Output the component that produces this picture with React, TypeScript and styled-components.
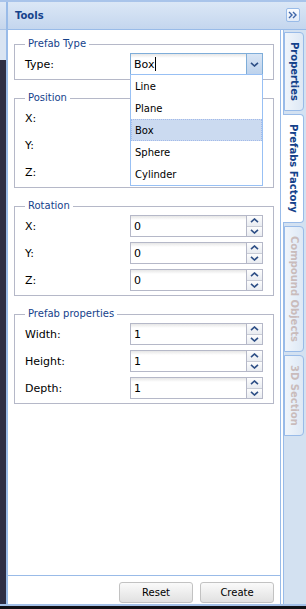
import styled, { createGlobalStyle } from "styled-components"

const GlobalStyle = createGlobalStyle`
  * { box-sizing: border-box; }
  html, body { margin: 0; padding: 0; background: #101014; overflow: hidden; }
  body { font-family: "DejaVu Sans", "Liberation Sans", sans-serif; }
`

const Frame = styled.div`
  width: 306px;
  height: 609px;
  display: flex;
  flex-direction: column;
  background: #111116;
`

const Shell = styled.div`
  height: 606px;
  display: flex;
  border-top: 2px solid #a9c4ea;
  border-bottom: 2px solid #a3c0e8;
`

const LeftStrip = styled.div`
  width: 6px;
  display: flex;
  flex-direction: column;
`

const StripCap = styled.div`
  height: 28px;
  background: linear-gradient(#dde8f6, #c6d6ec);
  border-bottom: 1px solid #a9c2e4;
`

const StripGap = styled.div`
  height: 30px;
  background: #d9e4f2;
`

const StripDark = styled.div`
  flex: 1;
  background: #2d2e45;
`

const Panel = styled.div`
  flex: 1;
  display: flex;
  flex-direction: column;
  border-left: 2px solid #99bbe8;
  min-width: 0;
`

const Header = styled.div`
  height: 28px;
  display: flex;
  align-items: center;
  justify-content: space-between;
  padding: 0 6px 0 7px;
  background: linear-gradient(#dbe7f6, #c4d6ee);
  border-bottom: 1px solid #99bbe8;
`

const Title = styled.span`
  font-weight: bold;
  font-size: 10px;
  color: #15428b;
`

const CollapseBtn = styled.button`
  width: 14px;
  height: 14px;
  padding: 0;
  margin-top: -2px;
  border: 1px solid #99bbe8;
  border-radius: 2px;
  background: linear-gradient(#fbfdff, #e2ebf7);
  display: flex;
  align-items: center;
  justify-content: center;
`

const Body = styled.div`
  flex: 1;
  display: flex;
  background: #fff;
  min-height: 0;
`

const FormCol = styled.div`
  width: 273px;
  display: flex;
  flex-direction: column;
  border-right: 1px solid #99bbe8;
`

const Form = styled.div`
  flex: 1;
  display: flex;
  flex-direction: column;
  gap: 12px;
  padding: 8px 6px 0;
  border-bottom: 1px solid #99bbe8;
`

const Footer = styled.div`
  height: 28px;
  display: flex;
  justify-content: flex-end;
  align-items: flex-start;
  gap: 7px;
  padding: 6px 6px 0 0;
`

const Button = styled.button`
  width: 74px;
  height: 21px;
  border: 1px solid #c2c2c2;
  border-radius: 3px;
  background: linear-gradient(#fafafa, #e1e1e1);
  font-family: "DejaVu Sans", sans-serif;
  font-size: 10px;
  color: #000;
  padding: 0;
`

const Fieldset = styled.fieldset`
  margin: 0;
  padding: 3px 10px 4px 10px;
  border: 1px solid #b5b8c8;
  display: flex;
  flex-direction: column;
  gap: 5px;
  min-width: 0;
`

const Legend = styled.legend`
  padding: 0 3px;
  font-size: 10px;
  line-height: 12px;
  color: #15428b;
`

const Row = styled.div`
  display: grid;
  grid-template-columns: 105px 133px;
  align-items: center;
  height: 22px;
`

const Label = styled.span`
  font-size: 11px;
  color: #000;
`

const Field = styled.div`
  position: relative;
  display: flex;
  height: 22px;
`

const Input = styled.div<{ $focus?: boolean }>`
  flex: 1;
  display: flex;
  align-items: center;
  padding: 0 3px;
  border: 1px solid ${p => (p.$focus ? "#7eadd9" : "#b5b8c8")};
  background: linear-gradient(#e6e6e6, #fff 4px);
  font-size: 11px;
  color: #000;
`

const Caret = styled.span`
  display: inline-block;
  width: 1px;
  height: 14px;
  margin-left: 1px;
  background: #000;
`

const ComboTrigger = styled.div`
  width: 16px;
  border: 1px solid #7eadd9;
  border-left: none;
  background: linear-gradient(#d8e5f5, #bdd2ec);
  display: flex;
  align-items: center;
  justify-content: center;
`

const SpinTrigger = styled.div`
  width: 16px;
  border: 1px solid #b5b8c8;
  border-left: none;
  display: flex;
  flex-direction: column;
`

const SpinHalf = styled.div<{ $down?: boolean }>`
  flex: 1;
  display: flex;
  align-items: center;
  justify-content: center;
  background: linear-gradient(#fdfdfd, #e9ecf1);
  border-top: ${p => (p.$down ? "1px solid #c9ccd6" : "none")};
`

const List = styled.div`
  position: absolute;
  top: 100%;
  left: 0;
  width: 133px;
  margin-top: -1px;
  border: 1px solid #98c0f4;
  background: #fff;
  z-index: 5;
`

const Item = styled.div<{ $selected?: boolean }>`
  height: 22px;
  display: flex;
  align-items: center;
  padding-left: 3px;
  font-size: 10px;
  color: #000;
  border: 1px ${p => (p.$selected ? "dotted #a3bae9" : "solid transparent")};
  background: ${p => (p.$selected ? "#cbdaf0" : "transparent")};
`

const TabStrip = styled.div`
  width: 23px;
  margin-left: 2px;
  display: flex;
  flex-direction: column;
  gap: 3px;
  padding-top: 2px;
  background: #d3e1f1;
  border-left: 1px solid #99bbe8;
`

const Tab = styled.div<{ $active?: boolean; $disabled?: boolean }>`
  width: ${p => (p.$active ? "21px" : "20px")};
  margin-left: ${p => (p.$active ? "-1px" : "0")};
  padding: 9px 0;
  writing-mode: vertical-rl;
  display: flex;
  align-items: center;
  font-size: 10px;
  font-weight: bold;
  line-height: 18px;
  color: ${p => (p.$disabled ? "#c9bcbc" : "#15428b")};
  background: ${p => (p.$active ? "#fff" : "linear-gradient(90deg, #f0f5fb, #dde8f5)")};
  border: 1px solid #99bbe8;
  border-left: ${p => (p.$active ? "none" : "1px solid #99bbe8")};
  border-radius: 0 4px 4px 0;
`

const Chevron = ({ up }: { up?: boolean }) => (
  <svg width="9" height="5" viewBox="0 0 9 5">
    <path
      d={up ? "M1 4.2 L4.5 1 L8 4.2" : "M1 0.8 L4.5 4 L8 0.8"}
      fill="none"
      stroke="#2e4f86"
      strokeWidth="1.6"
    />
  </svg>
)

const Spinner = ({ value }: { value: string }) => (
  <Field>
    <Input>{value}</Input>
    <SpinTrigger>
      <SpinHalf><Chevron up /></SpinHalf>
      <SpinHalf $down><Chevron /></SpinHalf>
    </SpinTrigger>
  </Field>
)

const prefabs = ["Line", "Plane", "Box", "Sphere", "Cylinder"]

const groups = [
  { title: "Position", rows: [["X:", ""], ["Y:", ""], ["Z:", ""]] },
  { title: "Rotation", rows: [["X:", "0"], ["Y:", "0"], ["Z:", "0"]] },
  { title: "Prefab properties", rows: [["Width:", "1"], ["Height:", "1"], ["Depth:", "1"]] },
]

const tabs = [
  { name: "Properties" },
  { name: "Prefabs Factory", active: true },
  { name: "Compound Objects", disabled: true },
  { name: "3D Section", disabled: true },
]

export default function App() {
  return (
    <Frame>
      <GlobalStyle />
      <Shell>
        <LeftStrip>
          <StripCap />
          <StripGap />
          <StripDark />
        </LeftStrip>
        <Panel>
          <Header>
            <Title>Tools</Title>
            <CollapseBtn>
              <svg width="10" height="8" viewBox="0 0 10 8">
                <path d="M1 1 L4 4 L1 7 M5 1 L8 4 L5 7" fill="none" stroke="#3f66a8" strokeWidth="1.4" />
              </svg>
            </CollapseBtn>
          </Header>
          <Body>
            <FormCol>
              <Form>
                <Fieldset>
                  <Legend>Prefab Type</Legend>
                  <Row>
                    <Label>Type:</Label>
                    <Field>
                      <Input $focus>Box<Caret /></Input>
                      <ComboTrigger><Chevron /></ComboTrigger>
                      <List>
                        {prefabs.map(p => (
                          <Item key={p} $selected={p === "Box"}>{p}</Item>
                        ))}
                      </List>
                    </Field>
                  </Row>
                </Fieldset>
                {groups.map(g => (
                  <Fieldset key={g.title}>
                    <Legend>{g.title}</Legend>
                    {g.rows.map(([label, value]) => (
                      <Row key={label}>
                        <Label>{label}</Label>
                        <Spinner value={value} />
                      </Row>
                    ))}
                  </Fieldset>
                ))}
              </Form>
              <Footer>
                <Button>Reset</Button>
                <Button>Create</Button>
              </Footer>
            </FormCol>
            <TabStrip>
              {tabs.map(t => (
                <Tab key={t.name} $active={t.active} $disabled={t.disabled}>{t.name}</Tab>
              ))}
            </TabStrip>
          </Body>
        </Panel>
      </Shell>
    </Frame>
  )
}
